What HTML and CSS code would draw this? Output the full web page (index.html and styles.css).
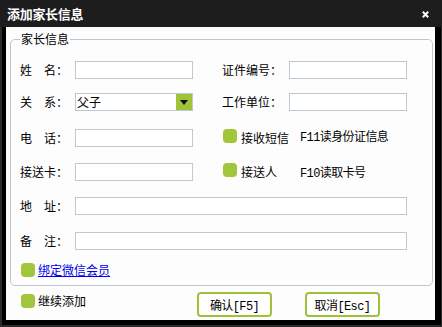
FILE: index.html
```html
<!DOCTYPE html>
<html lang="zh">
<head>
<meta charset="utf-8">
<title>添加家长信息</title>
<link rel="stylesheet" href="styles.css">
</head>
<body>
<div class="window">
  <div class="titlebar">
    <span class="title">添加家长信息</span>
    <svg class="close" width="7" height="7" viewBox="0 0 7 7"><path d="M0.8 0.8 L6.2 6.2 M6.2 0.8 L0.8 6.2" stroke="#fff" stroke-width="2"/></svg>
  </div>
  <div class="body">
    <fieldset class="group">
      <legend>家长信息</legend>
      <div class="form">
        <div class="row">
          <label class="lbl"><span class="just">姓名</span>：</label>
          <input class="field" type="text">
          <span class="sp"></span>
          <label class="lbl lbl-r"><span class="just w4">证件编号</span>：</label>
          <input class="field" type="text">
        </div>
        <div class="row row-rel">
          <label class="lbl"><span class="just">关系</span>：</label>
          <div class="select"><span class="sel-text">父子</span><span class="sel-btn"><span class="tri"></span></span></div>
          <span class="sp"></span>
          <label class="lbl lbl-r"><span class="just w4">工作单位</span>：</label>
          <input class="field" type="text">
        </div>
        <div class="row">
          <label class="lbl"><span class="just">电话</span>：</label>
          <input class="field" type="text">
          <span class="sp"></span>
          <div class="opt">
            <span class="check check-up"></span>
            <span class="opt-text">接收短信</span>
            <span class="hint">F11读身份证信息</span>
          </div>
        </div>
        <div class="row">
          <label class="lbl"><span class="just">接送卡</span>：</label>
          <input class="field" type="text">
          <span class="sp"></span>
          <div class="opt opt-top">
            <span class="check"></span>
            <span class="opt-text">接送人</span>
            <span class="hint hint-low">F10读取卡号</span>
          </div>
        </div>
        <div class="row">
          <label class="lbl"><span class="just">地址</span>：</label>
          <input class="field wide" type="text">
        </div>
        <div class="row row-note">
          <label class="lbl"><span class="just">备注</span>：</label>
          <input class="field wide" type="text">
        </div>
        <div class="row row-link">
          <span class="check"></span>
          <a class="link" href="#">绑定微信会员</a>
        </div>
      </div>
    </fieldset>
    <div class="footer">
      <div class="keep">
        <span class="check"></span>
        <span class="keep-text">继续添加</span>
      </div>
      <button class="btn" type="button">确认[F5]</button>
      <button class="btn" type="button">取消[Esc]</button>
    </div>
  </div>
</div>
</body>
</html>
```
FILE: styles.css
```css
html, body {
  margin: 0;
  padding: 0;
  background: #2b2b2b;
}
body {
  font-family: "Noto Sans CJK SC", "Noto Sans", sans-serif;
  font-size: 12px;
  color: #000;
}
.window {
  width: 442px;
  height: 327px;
  background: #2b2b2b;
  display: flex;
  flex-direction: column;
}
.titlebar {
  height: 27px;
  flex: none;
  background: #1d1d1d;
  display: flex;
  align-items: center;
  justify-content: space-between;
  padding: 0 13px 0 7px;
  color: #fff;
}
.title {
  font-weight: bold;
  font-size: 13px;
  line-height: 14px;
  letter-spacing: -0.3px;
}
.close {
  display: block;
  margin-top: 1px;
}
.body {
  flex: 1;
  margin: 0 1px 2px 2px;
  border-style: solid;
  border-color: #000;
  border-width: 0 6px 5px 4px;
  background: #fdfdfd;
  display: flex;
  flex-direction: column;
}
.group {
  margin: 5px 2px 0 4px;
  padding: 0 9px 8px 9px;
  border: 1px solid #b9c8d0;
  border-radius: 5px;
  min-width: 0;
}
.group legend {
  padding: 0 1px;
  margin-left: 0;
  font-size: 12px;
  line-height: 14px;
}
.form {
  margin-top: 15px;
  display: flex;
  flex-direction: column;
  gap: 16px;
}
.row {
  display: flex;
  align-items: center;
  height: 18px;
}
.row-rel {
  margin-top: -2px;
  margin-bottom: 2px;
}
.row-note {
  margin-top: 1px;
}
.row-link {
  height: 14px;
  margin-top: -3px;
}
.lbl {
  width: 55px;
  flex: none;
  display: flex;
  align-items: center;
  line-height: 14px;
  white-space: nowrap;
}
.lbl-r {
  width: 67px;
}
.just {
  display: inline-block;
  width: 36px;
  text-align: justify;
  text-align-last: justify;
}
.just.w4 {
  width: 48px;
}
.sp {
  width: 29px;
  flex: none;
}
.field {
  box-sizing: border-box;
  width: 118px;
  height: 18px;
  flex: none;
  margin: 0;
  padding: 0 2px;
  border: 1px solid #bccbd3;
  background: #fff;
  outline: none;
  font: inherit;
}
.field.wide {
  width: 332px;
}
.select {
  box-sizing: border-box;
  width: 118px;
  height: 18px;
  flex: none;
  display: flex;
  border: 1px solid #bccbd3;
  background: #fff;
}
.sel-text {
  flex: 1;
  padding-left: 1px;
  line-height: 16px;
}
.sel-btn {
  width: 16px;
  background: #9fc43a;
  display: flex;
  align-items: center;
  justify-content: center;
}
.tri {
  width: 0;
  height: 0;
  border-left: 4px solid transparent;
  border-right: 4px solid transparent;
  border-top: 5px solid #111;
  margin-top: 1px;
}
.opt {
  display: flex;
  align-items: center;
  margin-left: 1px;
  height: 18px;
}
.check {
  width: 14px;
  height: 14px;
  flex: none;
  background: #a1c53b;
  border-radius: 4px;
}
.check-up {
  margin-top: -5px;
}
.opt-top .check {
  margin-top: -4px;
}
.opt-text {
  width: 59px;
  margin-left: 4px;
  line-height: 14px;
}
.hint {
  font-family: "Liberation Mono", "Noto Sans CJK SC", monospace;
  font-size: 12px;
  line-height: 14px;
  letter-spacing: -0.6px;
}
.hint-low {
  margin-top: 4px;
}
.row-link .check {
  margin-left: 1px;
}
.link {
  margin-left: 3px;
  color: #0000ee;
  text-decoration: underline;
  line-height: 14px;
}
.footer {
  display: flex;
  align-items: flex-start;
  margin-top: 6px;
  padding-left: 15px;
}
.keep {
  width: 176px;
  display: flex;
  align-items: center;
  margin-top: 2px;
}
.keep-text {
  margin-left: 3px;
  line-height: 14px;
}
.btn {
  box-sizing: border-box;
  width: 75px;
  height: 25px;
  margin: 0 33px 0 0;
  padding: 0;
  border: 2px solid #9cc23a;
  border-radius: 4px;
  background: #fff;
  font-family: "Liberation Mono", "Noto Sans CJK SC", monospace;
  font-size: 12px;
  letter-spacing: -0.6px;
  color: #000;
}
```
